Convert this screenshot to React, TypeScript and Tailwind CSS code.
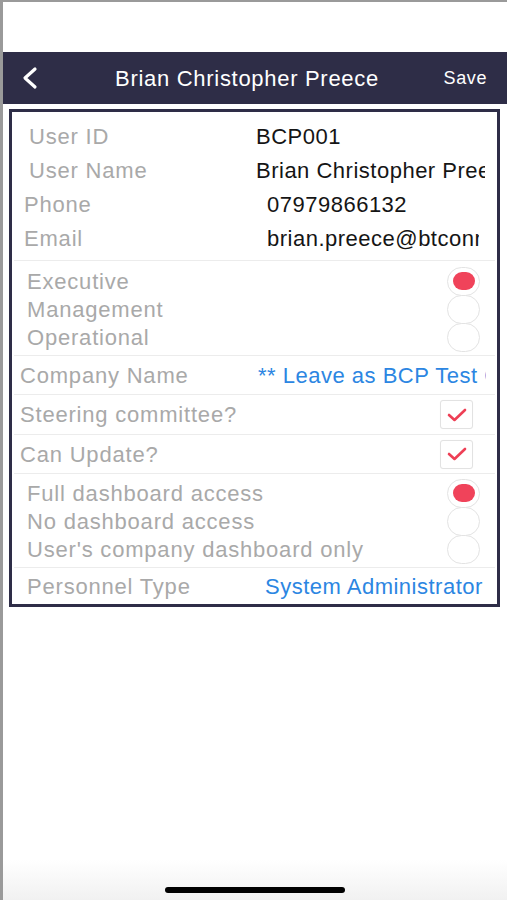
import React from "react";

const Radio = ({ on }: { on?: boolean }) => (
  <div className="w-[33px] h-[29px] rounded-full border border-[#e3e3e3] flex items-center justify-center bg-white">
    {on && <div className="w-[22px] h-[18px] rounded-full bg-[#f0435a]" />}
  </div>
);

const Check = () => (
  <div className="w-[33px] h-[29px] rounded-[3px] border border-[#e2e2e2] flex items-center justify-center bg-white shadow-[0_0_1px_rgba(0,0,0,0.05)]">
    <svg width="20" height="14" viewBox="0 0 20 14" fill="none">
      <path d="M2 7 L7.5 12 L18 2" stroke="#ee3f55" strokeWidth="2.6" strokeLinecap="round" strokeLinejoin="round" />
    </svg>
  </div>
);

const Sep = () => <div className="h-px bg-[#ececec] mx-[2px]" />;

const L = "text-[#a9a9a9] tracking-[0.8px]";
const V = "tracking-[0.5px]";

export default function App() {
  return (
    <div
      className="w-[507px] h-[900px] bg-white border-l-[3px] border-t-[2px] border-[#9a9a9a] flex flex-col relative overflow-hidden"
      style={{ fontFamily: '"Liberation Sans", Arial, sans-serif' }}
    >
      <div className="h-[50px]" />
      <div className="h-[52px] bg-[#2e2d47] flex items-center relative">
        <div className="pl-[17px] pr-2 flex items-center">
          <svg width="20" height="24" viewBox="0 0 20 24" fill="none">
            <path d="M15 3 L5 12 L15 21" stroke="white" strokeWidth="3.2" strokeLinecap="round" strokeLinejoin="round" />
          </svg>
        </div>
        <div className="absolute left-0 right-0 text-center text-white text-[22px] tracking-[0.7px] pointer-events-none pr-[16px]">
          Brian Christopher Preece
        </div>
        <div className="ml-auto pr-[20px] text-white text-[18px] tracking-[0.6px]">Save</div>
      </div>

      <div className="mt-[5px] ml-[6px] w-[491px] border-[3px] border-[#2e2d47] bg-white flex flex-col text-[22px]">
        <div className="pt-[7px] pb-[5px]">
          <div className="h-[34px] flex items-center">
            <div className={`pl-[17px] w-[244px] ${L}`}>User ID</div>
            <div className={`text-[#151515] ${V}`}>BCP001</div>
          </div>
          <div className="h-[34px] flex items-center">
            <div className={`pl-[17px] w-[244px] ${L}`}>User Name</div>
            <div className={`text-[#151515] whitespace-nowrap overflow-hidden w-[229px] ${V}`}>Brian Christopher Pree</div>
          </div>
          <div className="h-[34px] flex items-center">
            <div className={`pl-[12px] w-[255px] ${L}`}>Phone</div>
            <div className={`text-[#151515] ${V}`}>07979866132</div>
          </div>
          <div className="h-[34px] flex items-center">
            <div className={`pl-[12px] w-[255px] ${L}`}>Email</div>
            <div className={`text-[#151515] whitespace-nowrap overflow-hidden w-[212px] ${V}`}>brian.preece@btconn</div>
          </div>
        </div>
        <Sep />
        <div className="pt-[6px] pb-[4px]">
          {["Executive", "Management", "Operational"].map((t, i) => (
            <div key={t} className="h-[28px] flex items-center">
              <div className={`pl-[15px] flex-1 ${L}`}>{t}</div>
              <div className="mr-[17px]"><Radio on={i === 0} /></div>
            </div>
          ))}
        </div>
        <Sep />
        <div className="h-[38px] flex items-center">
          <div className={`pl-[8px] w-[246px] ${L}`}>Company Name</div>
          <div className={`text-[#2c86e2] whitespace-nowrap overflow-hidden w-[228px] ${V}`}>** Leave as BCP Test C</div>
        </div>
        <Sep />
        <div className="h-[39px] flex items-center">
          <div className={`pl-[8px] flex-1 ${L}`}>Steering committee?</div>
          <div className="mr-[24px]"><Check /></div>
        </div>
        <Sep />
        <div className="h-[38px] flex items-center">
          <div className={`pl-[8px] flex-1 ${L}`}>Can Update?</div>
          <div className="mr-[24px]"><Check /></div>
        </div>
        <Sep />
        <div className="pt-[5px] pb-[4px]">
          {["Full dashboard access", "No dashboard access", "User's company dashboard only"].map((t, i) => (
            <div key={t} className="h-[28px] flex items-center">
              <div className={`pl-[15px] flex-1 ${L}`}>{t}</div>
              <div className="mr-[17px]"><Radio on={i === 0} /></div>
            </div>
          ))}
        </div>
        <Sep />
        <div className="h-[36px] flex items-center">
          <div className={`pl-[15px] w-[253px] ${L}`}>Personnel Type</div>
          <div className={`text-[#2c86e2] whitespace-nowrap ${V}`}>System Administrator</div>
        </div>
      </div>

      <div className="flex-1" />
      <div className="h-[40px] bg-gradient-to-b from-white to-[#f1f1f1] flex items-end justify-center pb-[7px]">
        <div className="w-[180px] h-[6px] rounded-full bg-black" />
      </div>
    </div>
  );
}
